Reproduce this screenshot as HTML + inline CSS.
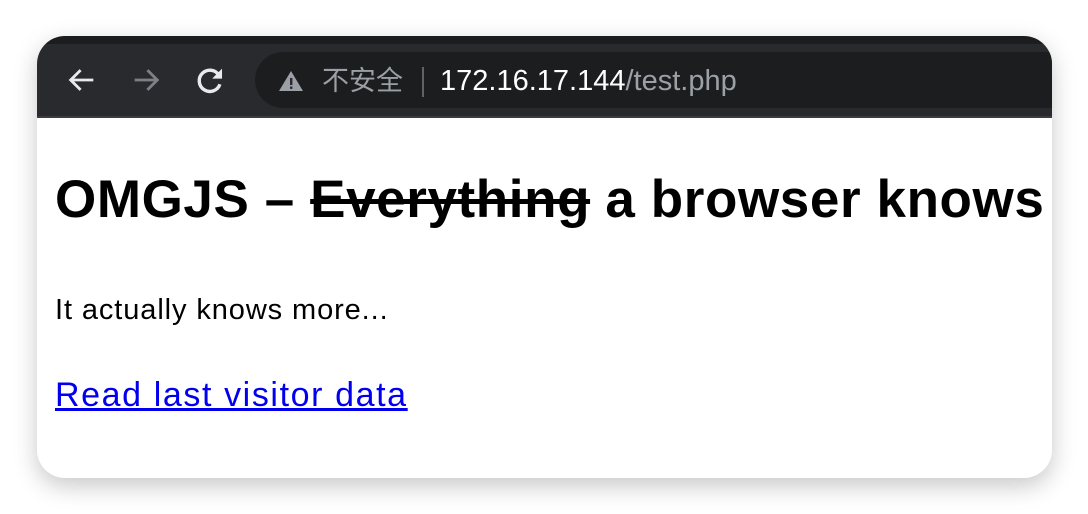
<!DOCTYPE html>
<html><head><meta charset="utf-8"><style>
html,body{margin:0;padding:0;width:1088px;height:514px;background:#fff;overflow:hidden;font-family:"Liberation Sans","Noto Sans CJK SC",sans-serif;}
.win{position:absolute;left:37px;top:36px;width:1015px;height:442px;border-radius:28px;overflow:hidden;background:#fff;box-shadow:0 8px 24px rgba(0,0,0,0.22);}
.top{position:absolute;left:0;top:0;width:100%;height:8px;background:#1c1d1f;}
.tb{position:absolute;left:0;top:8px;width:100%;height:72px;background:#292a2d;border-bottom:2px solid #3c3d40;}
.omni{position:absolute;left:218px;top:8px;width:820px;height:56px;border-radius:28px;background:#1c1d1f;}
.lbl{position:absolute;left:285px;top:22px;font-size:27px;color:#9aa0a6;line-height:30px;}
.sep{position:absolute;left:385px;top:23px;width:2px;height:30px;background:#5f6368;}
.url{position:absolute;left:403px;top:22px;font-size:29px;line-height:30px;color:#fff;}
.url span{color:#9aa0a6;}
.content{position:absolute;left:18px;top:82px;}
h1{position:absolute;left:0;top:52px;margin:0;font-size:53px;font-weight:bold;white-space:nowrap;line-height:60px;letter-spacing:0.6px;}
p{position:absolute;left:0;top:176px;margin:0;font-size:29px;white-space:nowrap;line-height:32px;letter-spacing:0.9px;}
a{position:absolute;left:0;top:259px;font-size:34px;color:#0000ee;white-space:nowrap;line-height:36px;letter-spacing:1.6px;}
</style></head><body>
<div class="win">
<div class="top"></div>
<div class="tb">
<svg style="position:absolute;left:28px;top:19px" width="34" height="34" viewBox="0 0 24 24"><path d="M20 12H5M11 5l-7 7 7 7" fill="none" stroke="#e8eaed" stroke-width="2"/></svg>
<svg style="position:absolute;left:92px;top:19px" width="34" height="34" viewBox="0 0 24 24"><path d="M4 12h15M13 5l7 7-7 7" fill="none" stroke="#7d8084" stroke-width="2"/></svg>
<svg style="position:absolute;left:156px;top:19px" width="34" height="34" viewBox="0 0 24 24"><path d="M18.5 9A7.5 7.5 0 1 0 19 15" fill="none" stroke="#e8eaed" stroke-width="2.4"/><path d="M20.5 4v7h-7z" fill="#e8eaed"/></svg>
<div class="omni"></div>
<svg style="position:absolute;left:241px;top:25px" width="26" height="24" viewBox="0 0 26 24"><path d="M13 2L25 22H1z" fill="#9aa0a6"/><rect x="12" y="9" width="2.4" height="7" fill="#292a2d"/><rect x="12" y="17.5" width="2.4" height="2.4" fill="#292a2d"/></svg>
<div class="lbl">不安全</div>
<div class="sep"></div>
<div class="url">172.16.17.144<span>/test.php</span></div>
</div>
<div class="content">
<h1>OMGJS – <s>Everything</s> a browser knows</h1>
<p>It actually knows more...</p>
<a href="#">Read last visitor data</a>
</div>
</div>
</body></html>
